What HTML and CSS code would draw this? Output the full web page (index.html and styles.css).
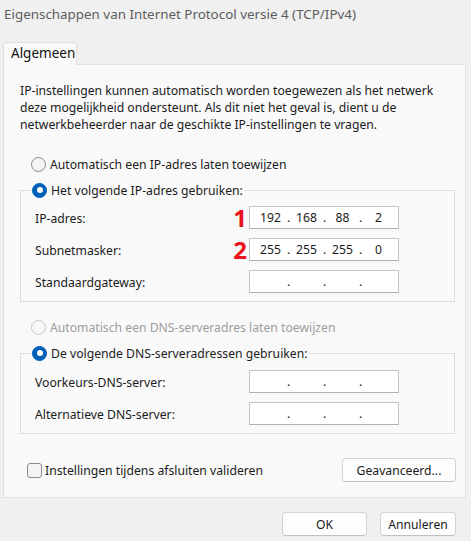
FILE: index.html
```html
<!DOCTYPE html>
<html lang="nl">
<head>
<meta charset="utf-8">
<title>Eigenschappen van Internet Protocol versie 4 (TCP/IPv4)</title>
<link rel="stylesheet" href="styles.css">
</head>
<body>
<div class="dialog">
  <div class="titlebar">Eigenschappen van Internet Protocol versie 4 (TCP/IPv4)</div>
  <div class="tabs"><div class="tab">Algemeen</div></div>
  <div class="panel">
    <p class="intro">IP-instellingen kunnen automatisch worden toegewezen als het netwerk<br>deze mogelijkheid ondersteunt. Als dit niet het geval is, dient u de<br>netwerkbeheerder naar de geschikte IP-instellingen te vragen.</p>

    <div class="radio-row first"><span class="radio"></span><span>Automatisch een IP-adres laten toewijzen</span></div>
    <fieldset class="group">
      <legend class="radio-row"><span class="radio checked"></span><span>Het volgende IP-adres gebruiken:</span></legend>
      <div class="field">
        <span class="label">IP-adres:</span>
        <span class="mark">1</span>
        <div class="ipbox"><span class="oct">192</span><span class="dot">.</span><span class="oct">168</span><span class="dot">.</span><span class="oct">88</span><span class="dot">.</span><span class="oct">2</span></div>
      </div>
      <div class="field">
        <span class="label">Subnetmasker:</span>
        <span class="mark">2</span>
        <div class="ipbox"><span class="oct">255</span><span class="dot">.</span><span class="oct">255</span><span class="dot">.</span><span class="oct">255</span><span class="dot">.</span><span class="oct">0</span></div>
      </div>
      <div class="field">
        <span class="label">Standaardgateway:</span>
        <div class="ipbox"><span class="oct"></span><span class="dot">.</span><span class="oct"></span><span class="dot">.</span><span class="oct"></span><span class="dot">.</span><span class="oct"></span></div>
      </div>
    </fieldset>

    <div class="radio-row second disabled"><span class="radio"></span><span>Automatisch een DNS-serveradres laten toewijzen</span></div>
    <fieldset class="group dns">
      <legend class="radio-row"><span class="radio checked"></span><span>De volgende DNS-serveradressen gebruiken:</span></legend>
      <div class="field">
        <span class="label">Voorkeurs-DNS-server:</span>
        <div class="ipbox"><span class="oct"></span><span class="dot">.</span><span class="oct"></span><span class="dot">.</span><span class="oct"></span><span class="dot">.</span><span class="oct"></span></div>
      </div>
      <div class="field">
        <span class="label">Alternatieve DNS-server:</span>
        <div class="ipbox"><span class="oct"></span><span class="dot">.</span><span class="oct"></span><span class="dot">.</span><span class="oct"></span><span class="dot">.</span><span class="oct"></span></div>
      </div>
    </fieldset>

    <div class="bottom-row">
      <div class="check-row"><span class="checkbox"></span><span>Instellingen tijdens afsluiten valideren</span></div>
      <button class="btn advanced">Geavanceerd...</button>
    </div>
  </div>
  <div class="actions">
    <button class="btn ok">OK</button>
    <button class="btn cancel">Annuleren</button>
  </div>
</div>
</body>
</html>
```

FILE: styles.css
```css
* { box-sizing: border-box; }
html, body {
  margin: 0;
  padding: 0;
  background: #f0f0f0;
}
body {
  font-family: "Noto Sans", "Open Sans", sans-serif;
  font-size: 12.2px;
  color: #1b1b1b;
  width: 471px;
  height: 541px;
  overflow: hidden;
}
.dialog {
  display: flex;
  flex-direction: column;
}
.titlebar {
  height: 28px;
  line-height: 28px;
  padding-left: 4px;
  font-size: 13.4px;
  color: #5c5c5c;
  white-space: nowrap;
}
.tabs {
  display: flex;
  padding: 14px 0 0 3px;
}
.tab {
  position: relative;
  z-index: 1;
  width: 74px;
  height: 23px;
  margin-bottom: -1px;
  padding-left: 7px;
  line-height: 21px;
  font-size: 13.5px;
  background: #f9f9f9;
  border: 1px solid #e0e0e0;
  border-bottom: none;
  border-radius: 3px 3px 0 0;
  color: #111;
}
.panel {
  margin-left: 3px;
  width: 463px;
  background: #f9f9f9;
  border: 1px solid #e0e0e0;
  padding: 17px 10px 15px 16px;
  display: flex;
  flex-direction: column;
}
.intro {
  margin: 0;
  line-height: 17px;
  white-space: nowrap;
}
.radio-row {
  display: flex;
  align-items: center;
  gap: 4px;
  height: 20px;
  white-space: nowrap;
}
.radio-row.first { margin: 21px 0 0 11px; }
.radio-row.second { margin: 15px 0 0 11px; }
.radio-row.disabled { color: #9d9d9d; }
.radio {
  width: 15px;
  height: 15px;
  border-radius: 50%;
  border: 1px solid #8b8b8b;
  background: #f4f4f4;
  display: inline-flex;
  align-items: center;
  justify-content: center;
  flex: none;
}
.disabled .radio {
  border-color: #c8c8c8;
  background: #f7f7f7;
}
.radio.checked {
  background: #005fb8;
  border-color: #005fb8;
}
.radio.checked::after {
  content: "";
  width: 6px;
  height: 6px;
  border-radius: 50%;
  background: #fff;
}
.group {
  margin: 6px 0 0 0;
  border: 1px solid #dcdcdc;
  padding: 6px 55px 8px 11px;
  min-width: 0;
  display: flex;
  flex-direction: column;
  gap: 9px;
}
.group.dns { padding-top: 7px; }
.group legend {
  padding: 0 1px 0 0;
}
.field {
  display: flex;
  align-items: center;
  height: 23px;
  padding-left: 3px;
}
.label {
  flex: 1;
  padding-top: 2px;
}
.mark {
  width: 16px;
  margin-right: 2px;
  text-align: right;
  color: #e8141c;
  font-weight: 700;
  font-size: 24px;
  line-height: 23px;
}
.ipbox {
  width: 150px;
  height: 23px;
  background: #fff;
  border: 1px solid #c6c6c6;
  border-bottom-color: #b0b0b0;
  display: flex;
  align-items: center;
  padding-left: 4px;
  color: #1b1b1b;
}
.oct {
  width: 33px;
  text-align: center;
}
.dot {
  width: 3px;
  text-align: center;
}
.bottom-row {
  display: flex;
  align-items: center;
  justify-content: space-between;
  margin-top: 24px;
  height: 24px;
}
.check-row {
  display: flex;
  align-items: center;
  gap: 3px;
  margin-left: 7px;
  white-space: nowrap;
}
.checkbox {
  width: 15px;
  height: 15px;
  border: 1px solid #8b8b8b;
  border-radius: 3px;
  background: #f4f4f4;
}
.btn {
  font-family: inherit;
  font-size: 12.2px;
  color: #1b1b1b;
  background: #fdfdfd;
  border: 1px solid #d3d3d3;
  border-bottom-color: #c2c2c2;
  border-radius: 4px;
  height: 24px;
  padding: 0;
}
.advanced { width: 114px; margin-right: -1px; }
.actions {
  display: flex;
  justify-content: flex-end;
  gap: 13px;
  margin-top: 14px;
  padding-right: 15px;
}
.ok { width: 85px; }
.cancel { width: 76px; }
```
